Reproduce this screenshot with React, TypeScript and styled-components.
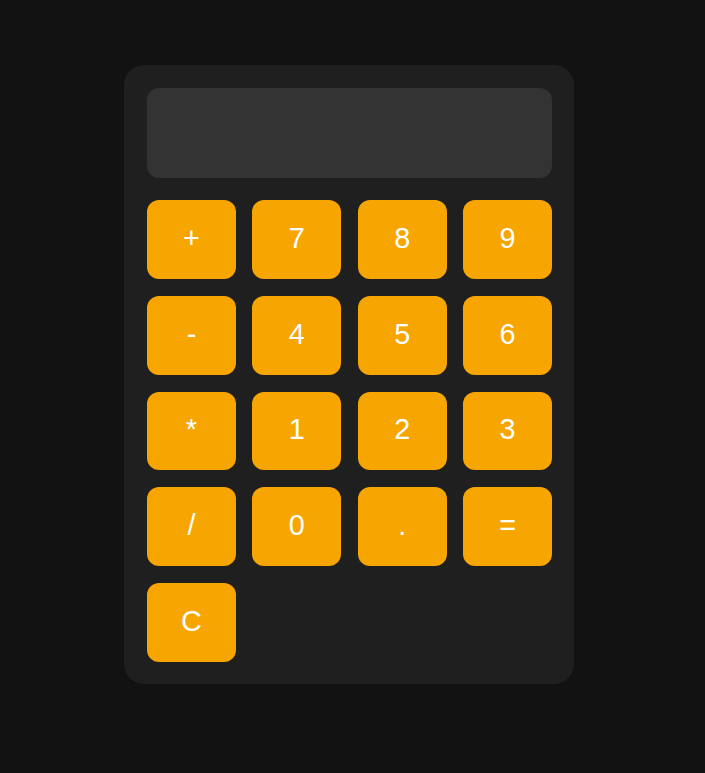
import styled, { createGlobalStyle } from "styled-components";

const GlobalStyle = createGlobalStyle`
  html, body {
    margin: 0;
    padding: 0;
    background-color: #121212;
    font-family: "Liberation Sans", Arial, sans-serif;
  }
`;

const Page = styled.div`
  min-height: 100vh;
  display: flex;
  justify-content: center;
  align-items: flex-start;
  padding: 65px 7px 0 0;
  box-sizing: border-box;
`;

const Calculator = styled.div`
  width: 405px;
  padding: 23px 22px 22px 23px;
  background-color: #1f1f1f;
  border-radius: 20px;
`;

const Display = styled.div`
  height: 90px;
  margin-bottom: 22px;
  background-color: #333333;
  border-radius: 12px;
  color: #fff;
  font-size: 32px;
  display: flex;
  align-items: center;
  justify-content: flex-end;
  padding: 0 20px;
  box-sizing: border-box;
`;

const Keys = styled.div`
  display: grid;
  grid-template-columns: repeat(4, 1fr);
  grid-auto-rows: 78.75px;
  row-gap: 17px;
  column-gap: 16.5px;
`;

const Key = styled.button`
  border: none;
  border-radius: 12px;
  background-color: #f7a500;
  color: #ffffff;
  font-family: "Liberation Sans", Arial, sans-serif;
  font-size: 28.8px;
  cursor: pointer;
  padding: 0 0 2px;
  display: flex;
  align-items: center;
  justify-content: center;

  &:hover {
    background-color: #ffb41f;
  }
`;

const keys = ["+", "7", "8", "9", "-", "4", "5", "6", "*", "1", "2", "3", "/", "0", ".", "=", "C"];

export default function App() {
  return (
    <>
      <GlobalStyle />
      <Page>
        <Calculator>
          <Display />
          <Keys>
            {keys.map((k) => (
              <Key key={k}>{k}</Key>
            ))}
          </Keys>
        </Calculator>
      </Page>
    </>
  );
}
